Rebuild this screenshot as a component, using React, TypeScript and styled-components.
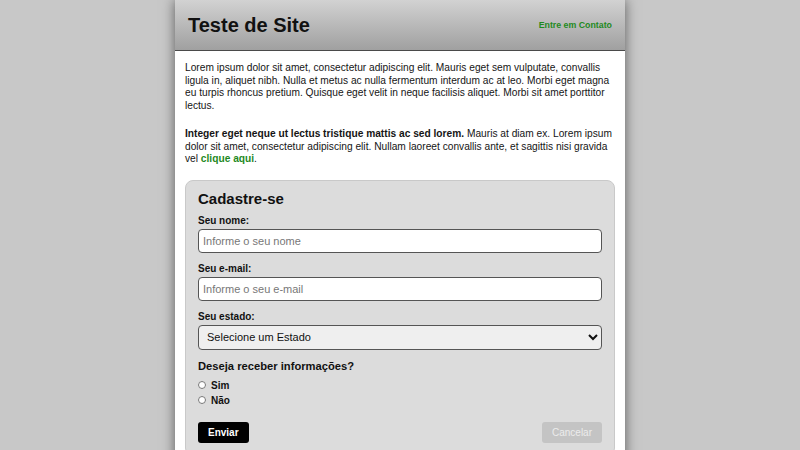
import React from 'react'
import styled, { createGlobalStyle } from 'styled-components'

const GlobalStyle = createGlobalStyle`
  html, body {
    margin: 0;
    padding: 0;
    background: #c8c8c8;
    font-family: "Liberation Sans", Arial, sans-serif;
  }
`

const Page = styled.div`
  width: 450px;
  margin: 0 auto;
  background: #fff;
  min-height: 450px;
  box-shadow: 0 0 12px rgba(0, 0, 0, 0.55);
`

const Header = styled.header`
  height: 50px;
  display: flex;
  align-items: center;
  justify-content: space-between;
  padding: 0 13px;
  background: linear-gradient(to bottom, #d2d2d2, #a0a0a0);
  border-bottom: 1px solid #4a4a4a;
`

const Title = styled.h1`
  margin: 0;
  font-size: 20px;
  font-weight: bold;
  color: #111;
`

const ContactLink = styled.a`
  font-size: 8.8px;
  font-weight: bold;
  color: #1f8a1f;
  text-decoration: none;
`

const Content = styled.main`
  padding: 11px 10px 10px;
`

const Paragraph = styled.p`
  margin: 0;
  font-size: 10.2px;
  line-height: 12.7px;
  color: #151515;
  & + & { margin-top: 15px; }
`

const GreenLink = styled.a`
  font-weight: bold;
  color: #1f8a1f;
  text-decoration: none;
`

const FormBox = styled.form`
  margin-top: 14px;
  background: #dcdcdc;
  border: 1px solid #c9c9c9;
  border-radius: 8px;
  padding: 9px 12px 12px;
`

const FormTitle = styled.h2`
  margin: 0 0 8px;
  font-size: 15px;
  line-height: 17px;
  color: #111;
`

const Field = styled.div`
  display: flex;
  flex-direction: column;
  gap: 2px;
  margin-bottom: 10px;
`

const Label = styled.label`
  font-size: 10px;
  line-height: 12px;
  font-weight: bold;
  color: #111;
`

const TextInput = styled.input`
  box-sizing: border-box;
  height: 24px;
  padding: 0 4px;
  border: 1px solid #555;
  border-radius: 4px;
  background: #fff;
  font-family: inherit;
  font-size: 11px;
  outline: none;
  &::placeholder { color: #777; }
`

const Select = styled.select`
  box-sizing: border-box;
  height: 25px;
  padding: 0 4px;
  border: 1px solid #555;
  border-radius: 4px;
  background: #efefef;
  font-family: inherit;
  font-size: 11px;
  color: #111;
`

const Question = styled.h3`
  margin: 0 0 5px;
  font-size: 11.2px;
  line-height: 13px;
  color: #111;
`

const RadioRow = styled.label`
  display: flex;
  align-items: center;
  gap: 5px;
  height: 15px;
  font-size: 10px;
  font-weight: bold;
  color: #111;
  input { margin: 0; width: 8px; height: 8px; }
`

const Actions = styled.div`
  display: flex;
  justify-content: space-between;
  margin-top: 14px;
`

const Button = styled.button<{ $variant?: 'primary' | 'muted' }>`
  height: 21px;
  padding: 0 10px;
  border: none;
  border-radius: 3px;
  font-family: inherit;
  font-size: 10px;
  font-weight: ${p => (p.$variant === 'muted' ? 'normal' : 'bold')};
  background: ${p => (p.$variant === 'muted' ? '#c4c4c4' : '#000')};
  color: ${p => (p.$variant === 'muted' ? '#ececec' : '#fff')};
`

export default function App() {
  return (
    <>
      <GlobalStyle />
      <Page>
        <Header>
          <Title>Teste de Site</Title>
          <ContactLink href="#">Entre em Contato</ContactLink>
        </Header>
        <Content>
          <Paragraph>
            Lorem ipsum dolor sit amet, consectetur adipiscing elit. Mauris eget sem vulputate, convallis
            ligula in, aliquet nibh. Nulla et metus ac nulla fermentum interdum ac at leo. Morbi eget magna
            eu turpis rhoncus pretium. Quisque eget velit in neque facilisis aliquet. Morbi sit amet porttitor
            lectus.
          </Paragraph>
          <Paragraph>
            <strong>Integer eget neque ut lectus tristique mattis ac sed lorem.</strong> Mauris at diam ex. Lorem ipsum
            dolor sit amet, consectetur adipiscing elit. Nullam laoreet convallis ante, et sagittis nisi gravida
            vel <GreenLink href="#">clique aqui</GreenLink>.
          </Paragraph>
          <FormBox>
            <FormTitle>Cadastre-se</FormTitle>
            <Field>
              <Label>Seu nome:</Label>
              <TextInput placeholder="Informe o seu nome" />
            </Field>
            <Field>
              <Label>Seu e-mail:</Label>
              <TextInput placeholder="Informe o seu e-mail" />
            </Field>
            <Field>
              <Label>Seu estado:</Label>
              <Select defaultValue="">
                <option value="">Selecione um Estado</option>
              </Select>
            </Field>
            <Question>Deseja receber informações?</Question>
            <RadioRow><input type="radio" name="info" /> Sim</RadioRow>
            <RadioRow><input type="radio" name="info" /> Não</RadioRow>
            <Actions>
              <Button type="button">Enviar</Button>
              <Button type="button" $variant="muted">Cancelar</Button>
            </Actions>
          </FormBox>
        </Content>
      </Page>
    </>
  )
}
